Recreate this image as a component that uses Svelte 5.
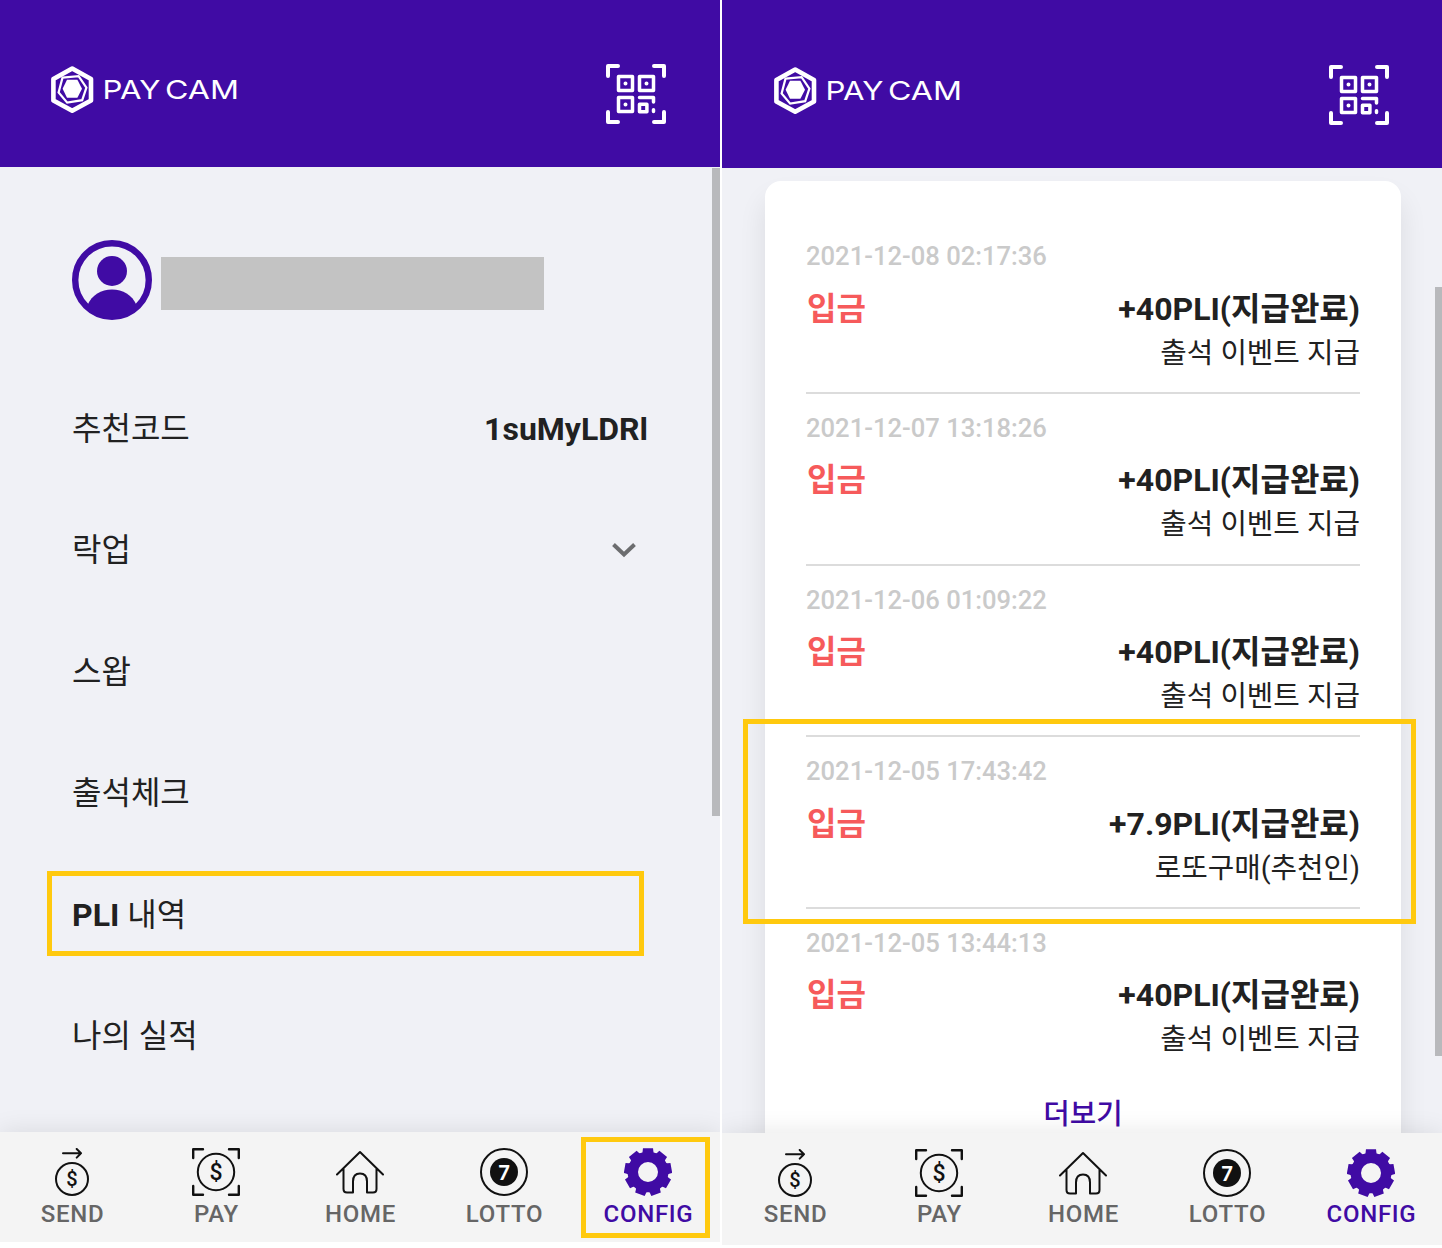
<script lang="ts">
  type Entry = { date: string; amount: string; memo: string };

  const menu = ['락업', '스왑', '출석체크'];

  const entries: Entry[] = [
    { date: '2021-12-08 02:17:36', amount: '+40PLI(지급완료)', memo: '출석 이벤트 지급' },
    { date: '2021-12-07 13:18:26', amount: '+40PLI(지급완료)', memo: '출석 이벤트 지급' },
    { date: '2021-12-06 01:09:22', amount: '+40PLI(지급완료)', memo: '출석 이벤트 지급' },
    { date: '2021-12-05 17:43:42', amount: '+7.9PLI(지급완료)', memo: '로또구매(추천인)' },
    { date: '2021-12-05 13:44:13', amount: '+40PLI(지급완료)', memo: '출석 이벤트 지급' },
  ];

  const tabs = ['SEND', 'PAY', 'HOME', 'LOTTO', 'CONFIG'];

  // nine-toothed cog, hole cut out with evenodd
  function gearPath() {
    const pts: string[] = [];
    const at = (r: number, deg: number) => {
      const a = ((deg - 90) * Math.PI) / 180;
      return `${(24 + r * Math.cos(a)).toFixed(2)} ${(24 + r * Math.sin(a)).toFixed(2)}`;
    };
    for (let i = 0; i < 9; i++) {
      const c = i * 40;
      pts.push(at(20.4, c - 16), at(21.4, c - 14.5), at(24.2, c - 12), at(24.2, c + 12), at(21.4, c + 14.5), at(20.4, c + 16));
    }
    return `M${pts.join('L')}ZM34 24A10 10 0 1 0 14 24A10 10 0 1 0 34 24Z`;
  }
  const gear = gearPath();
</script>

{#snippet header()}
  <header>
    <svg class="logo" width="190" height="50" viewBox="0 0 190 50">
      <path d="M22.2 3.6 41 14V35.4L22.2 45.8 3.4 35.4V14Z" fill="none" stroke="#fff" stroke-width="4.6" stroke-linejoin="round" />
      <path d="M12.5 12.6 28.6 11.2 36.4 22.6 32.2 35.2 17.2 37.6 8.6 27.4Z" fill="none" stroke="#fff" stroke-width="2.2" />
      <path d="M17 14.7H27.4L32 23.7 27.4 32.7H17L12.6 23.7Z" fill="#fff" />
      <text class="wordmark" x="52.5" y="34.3" textLength="58" lengthAdjust="spacingAndGlyphs">PAY</text>
      <text class="wordmark" x="115" y="34.3" textLength="74" lengthAdjust="spacingAndGlyphs">CAM</text>
    </svg>
    <svg class="qr" width="60" height="60" viewBox="0 0 60 60" fill="none" stroke="#fff" stroke-width="4" stroke-linecap="round" stroke-linejoin="round">
      <path d="M2 12V2H12M48 2H58V12M2 48V58H12M48 58H58V48" />
      <g stroke-width="3.5">
        <rect x="12.5" y="12.5" width="14" height="14" />
        <rect x="33.5" y="12.5" width="14" height="14" />
        <rect x="12.5" y="33.5" width="14" height="14" />
        <rect x="33.5" y="40.3" width="7.4" height="7.4" />
        <path d="M33.5 33.5H47.5V38M47.5 45.8V47.6" />
      </g>
      <path d="M19.5 19.5h0M40.5 19.5h0M19.5 40.5h0" />
    </svg>
  </header>
{/snippet}

{#snippet icon(name: string)}
  <svg width="48" height="48" viewBox="0 0 48 48" fill="none" stroke="#111" stroke-width="2" stroke-linecap="round" stroke-linejoin="round">
    {#if name === 'SEND'}
      <path d="M15 5.3H33M28.7 1 33 5.3 28.7 9.6" />
      <circle cx="24" cy="31" r="16" />
      <text class="dollar" x="24" y="38" font-size="20">$</text>
    {:else if name === 'PAY'}
      <path d="M1.2 10V1.2H11M37 1.2H46.8V10M1.2 38V46.8H11M37 46.8H46.8V38" stroke-width="2.4" />
      <circle cx="24" cy="24" r="18.2" />
      <text class="dollar" x="24" y="32" font-size="23">$</text>
    {:else if name === 'HOME'}
      <path d="M1 26.5 24 4 47 26.5M7.5 21V41Q7.5 44.5 11 44.5H17V33.5Q17 25.5 24 25.5T31 33.5V44.5H37Q40.5 44.5 40.5 41V21" />
    {:else if name === 'LOTTO'}
      <circle cx="24" cy="24" r="23" />
      <circle cx="24" cy="24" r="14" fill="#111" stroke="none" />
      <text class="seven" x="24" y="31.6">7</text>
    {:else}
      <path d={gear} fill="#400ba4" stroke="none" fill-rule="evenodd" />
    {/if}
  </svg>
{/snippet}

{#snippet tabbar()}
  <nav>
    {#each tabs as tab}
      <div class="tab" class:active={tab === 'CONFIG'}>
        {@render icon(tab)}
        <span>{tab}</span>
      </div>
    {/each}
  </nav>
{/snippet}

<div class="board">
  <section class="screen config">
    {@render header()}
    <main>
      <div class="profile">
        <svg width="80" height="80" viewBox="0 0 80 80" fill="#400ba4">
          <circle cx="40" cy="40" r="36.8" fill="none" stroke="#400ba4" stroke-width="6.4" />
          <circle cx="40" cy="31" r="15" />
          <path d="M15.5 65C20 55 29 49.5 40 49.5S60 55 64.5 65C58 73 50 79 40 79S22 73 15.5 65Z" />
        </svg>
        <div class="mask"></div>
      </div>
      <div class="item">
        <span>추천코드</span>
        <b>1suMyLDRl</b>
      </div>
      {#each menu as label}
        <div class="item">
          <span>{label}</span>
          {#if label === '락업'}
            <svg class="chevron" width="24" height="16" viewBox="0 0 24 16" fill="none" stroke="#6c6d6f" stroke-width="4">
              <path d="M1.5 2.5 12 12.5 22.5 2.5" />
            </svg>
          {/if}
        </div>
      {/each}
      <div class="item"><span><b>PLI</b> 내역</span></div>
      <div class="item"><span>나의 실적</span></div>
    </main>
    {@render tabbar()}
    <i class="scroll"></i>
    <i class="mark mark-menu"></i>
    <i class="mark mark-tab"></i>
  </section>

  <section class="screen history">
    {@render header()}
    <main>
      <div class="card">
        {#each entries as entry}
          <article>
            <time>{entry.date}</time>
            <div class="line">
              <span class="kind">입금</span>
              <span class="amount">{entry.amount}</span>
            </div>
            <div class="memo">{entry.memo}</div>
          </article>
        {/each}
        <div class="more">더보기</div>
      </div>
    </main>
    {@render tabbar()}
    <i class="scroll"></i>
    <i class="mark mark-entry"></i>
  </section>
</div>

<style>
  :global(body) {
    background: #fff;
  }
  .board {
    display: grid;
    grid-template-columns: 720px 720px;
    column-gap: 2px;
    align-items: start;
    width: 1442px;
    height: 1248px;
    overflow: hidden;
    font-family: Roboto, 'Noto Sans CJK KR', sans-serif;
    color: #212121;
  }
  .screen {
    position: relative;
    display: flex;
    flex-direction: column;
    height: 1242px;
    overflow: hidden;
    background: #f0f1f6;
  }
  .history {
    height: 1245px;
  }
  header {
    display: flex;
    flex: none;
    justify-content: space-between;
    align-items: flex-start;
    box-sizing: border-box;
    height: 167px;
    padding: 64px 54px 0 50px;
    background: #400ba4;
  }
  .history header {
    height: 168px;
    padding: 65px 53px 0 51px;
  }
  .logo {
    margin-top: 1px;
  }
  .wordmark {
    font-family: Inter, sans-serif;
    font-size: 26px;
    font-weight: 400;
    fill: #fff;
  }
  main {
    flex: 1;
    min-height: 0;
    box-sizing: border-box;
  }
  .config main {
    padding: 73px 72px 0;
  }
  .profile {
    display: flex;
    align-items: center;
    gap: 9px;
    height: 80px;
    margin-bottom: 47.8px;
  }
  .mask {
    width: 383px;
    height: 53px;
    margin-top: 7px;
    background: #c3c3c3;
  }
  .item {
    display: flex;
    justify-content: space-between;
    align-items: center;
    height: 121.5px;
    font-size: 32px;
    line-height: 48px;
  }
  .item b {
    font-weight: 700;
  }
  .chevron {
    margin-right: 12px;
  }
  .history main {
    padding: 13px 41px 0 43px;
  }
  .card {
    box-sizing: border-box;
    height: 1040px;
    padding: 41.4px 41px 0;
    border-radius: 16px;
    background: #fff;
    box-shadow: 0 18px 28px rgba(0, 0, 0, 0.09);
  }
  article {
    box-sizing: border-box;
    height: 171.6px;
    padding-top: 18px;
    border-bottom: 2px solid #dcdcdc;
  }
  article:last-of-type {
    border-bottom: none;
  }
  time {
    display: block;
    height: 46.4px;
    font-size: 25.6px;
    font-weight: 500;
    line-height: 32px;
    color: #cacaca;
  }
  .line {
    display: flex;
    justify-content: space-between;
    height: 45px;
    font-size: 32px;
    font-weight: 700;
    line-height: 44px;
  }
  .kind {
    padding-left: 1px;
    color: #f65a5b;
  }
  .memo {
    font-size: 28.8px;
    line-height: 43px;
    text-align: right;
  }
  .more {
    margin-top: 14px;
    font-size: 28.8px;
    font-weight: 500;
    line-height: 40px;
    text-align: center;
    color: #400ba4;
  }
  nav {
    position: relative;
    display: flex;
    flex: none;
    box-sizing: border-box;
    height: 110px;
    padding-top: 16px;
    background: #f4f4f4;
    box-shadow: 0 0 24px rgba(0, 0, 0, 0.1);
  }
  .history nav {
    height: 112px;
    padding-left: 1px;
  }
  .tab {
    display: flex;
    flex: none;
    flex-direction: column;
    align-items: center;
    gap: 4px;
    width: 144px;
    font-size: 24px;
    font-weight: 500;
    line-height: 28px;
    letter-spacing: 0.7px;
    color: #666;
  }
  .tab span {
    padding-left: 1px;
  }
  .history .tab {
    gap: 3px;
  }
  .tab.active {
    color: #400ba4;
  }
  .dollar,
  .seven {
    font-family: Roboto, sans-serif;
    font-weight: 500;
    text-anchor: middle;
    letter-spacing: 0;
    stroke: none;
    fill: #111;
  }
  .seven {
    font-family: Lato, sans-serif;
    font-size: 20px;
    font-weight: 900;
    fill: #fff;
  }
  .scroll {
    position: absolute;
    top: 168px;
    right: 0;
    width: 8px;
    height: 648px;
    background: #b8b9bc;
  }
  .history .scroll {
    top: 287px;
    width: 7px;
    height: 769px;
  }
  .mark {
    position: absolute;
    box-sizing: border-box;
    border: 5px solid #ffc90e;
  }
  .mark-menu {
    top: 871px;
    left: 47px;
    width: 597px;
    height: 85px;
  }
  .mark-tab {
    top: 1137px;
    left: 581px;
    width: 129px;
    height: 101px;
  }
  .mark-entry {
    top: 719px;
    left: 21px;
    width: 673px;
    height: 205px;
  }
</style>
